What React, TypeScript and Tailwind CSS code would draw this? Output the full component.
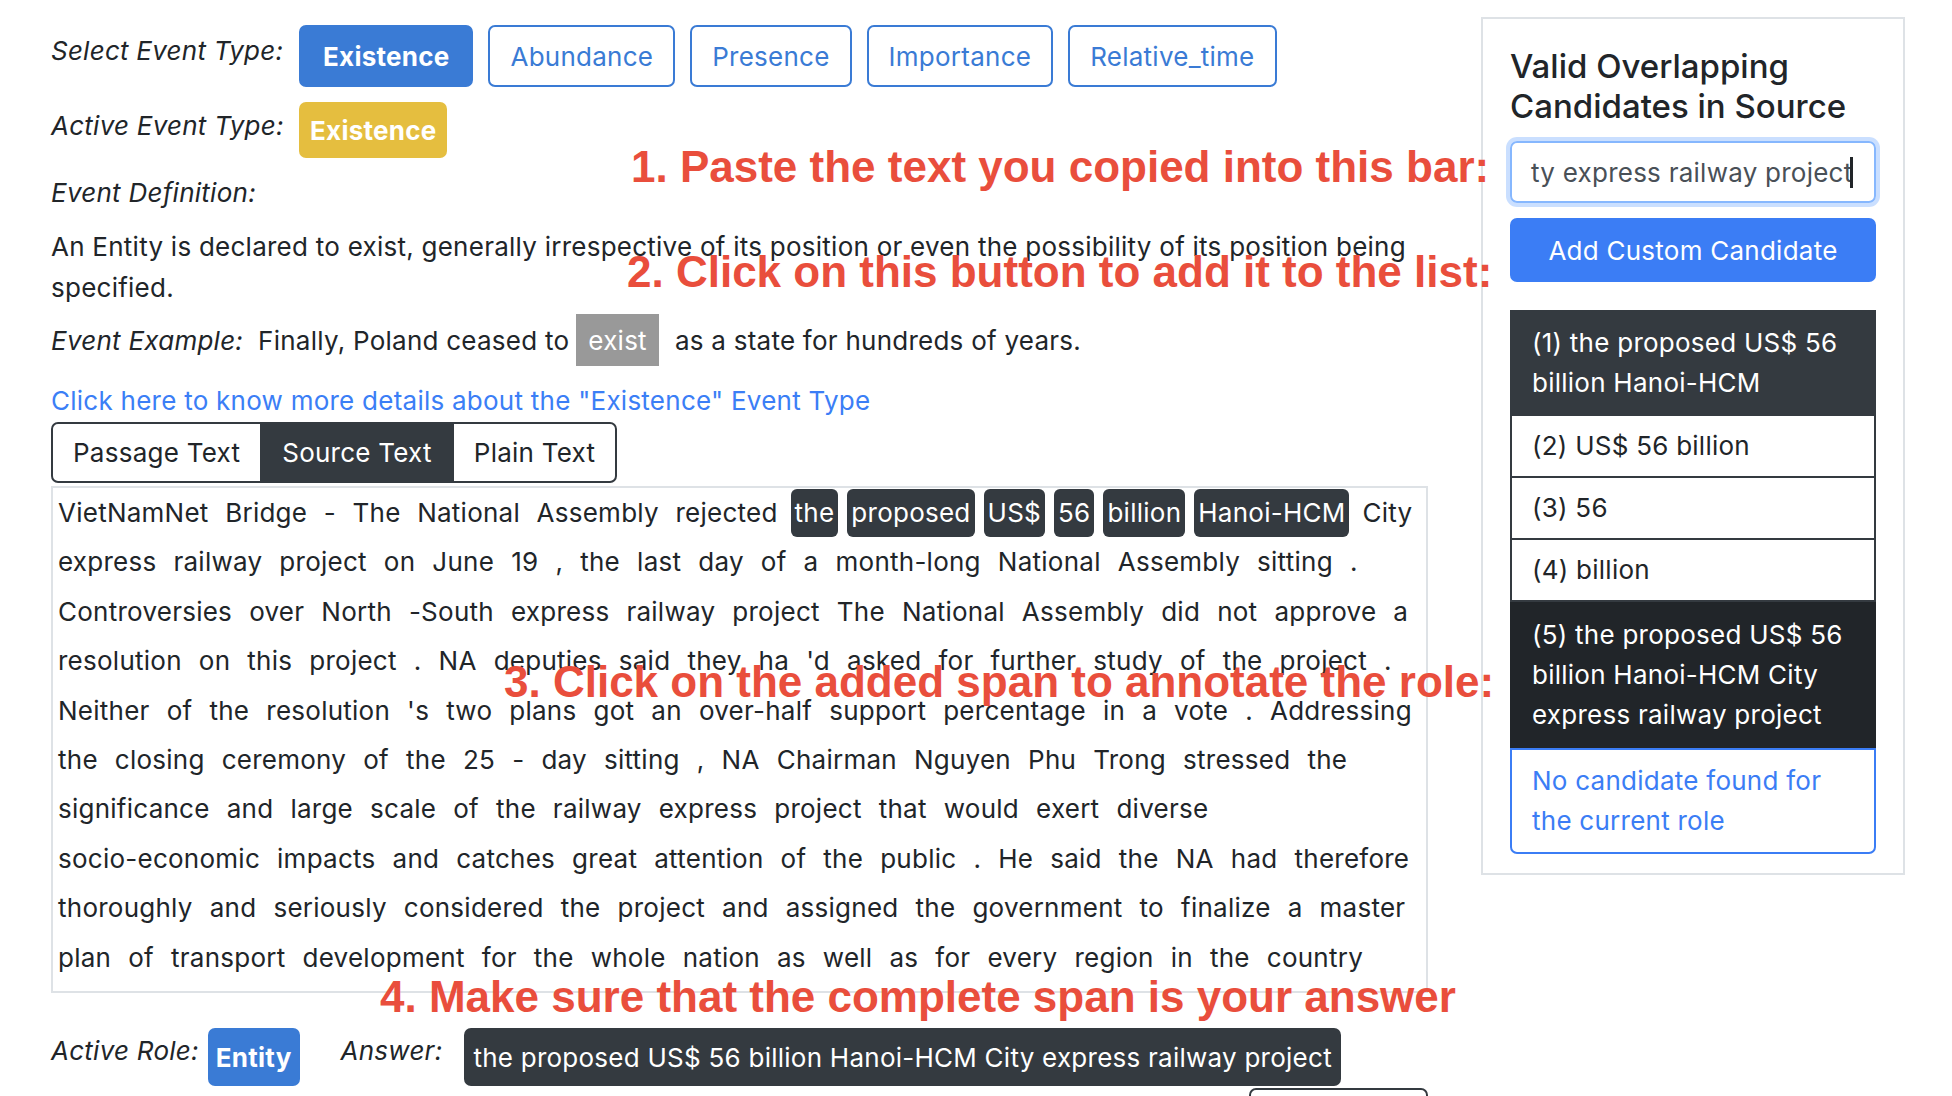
const eventTypes = ['Abundance', 'Presence', 'Importance', 'Relative_time']

const chips = ['the', 'proposed', 'US$', '56', 'billion', 'Hanoi-HCM']

const passageLines = [
  'express railway project on June 19 , the last day of a month-long National Assembly sitting .',
  'Controversies over North -South express railway project The National Assembly did not approve a',
  "resolution on this project . NA deputies said they ha 'd asked for further study of the project .",
  "Neither of the resolution 's two plans got an over-half support percentage in a vote . Addressing",
  'the closing ceremony of the 25 - day sitting , NA Chairman Nguyen Phu Trong stressed the',
  'significance and large scale of the railway express project that would exert diverse',
  'socio-economic impacts and catches great attention of the public . He said the NA had therefore',
  'thoroughly and seriously considered the project and assigned the government to finalize a master',
  'plan of transport development for the whole nation as well as for every region in the country',
]

const hints = [
  { text: '1. Paste the text you copied into this bar:', pos: 'left-[631px] top-[145px]' },
  { text: '2. Click on this button to add it to the list:', pos: 'left-[627px] top-[250px]' },
  { text: '3. Click on the added span to annotate the role:', pos: 'left-[504px] top-[660px]' },
  { text: '4. Make sure that the complete span is your answer', pos: 'left-[380px] top-[975px]' },
]

const App = () => {
  return (
    <div className="relative flex h-[1096px] w-[1952px] items-start overflow-hidden bg-white font-['Inter',sans-serif] text-[26px] tracking-[0.25px] text-[#212529]">
      {/* left column */}
      <div className="ml-[51px] flex w-[1377px] shrink-0 flex-col pt-[25px]">
        <div className="flex items-start">
          <div className="w-[248px] shrink-0 pt-[5px] italic leading-[41px]">Select Event Type:</div>
          <div className="flex gap-[15px]">
            <button className="h-[62px] rounded-[7px] border-2 border-[#3a7bd5] bg-[#3a7bd5] px-[22px] font-bold text-white">
              Existence
            </button>
            {eventTypes.map((t) => (
              <button
                key={t}
                className="h-[62px] rounded-[7px] border-2 border-[#3a7bd5] px-[20px] text-[#3a7bd5]"
              >
                {t}
              </button>
            ))}
          </div>
        </div>

        <div className="mt-[15px] flex items-start">
          <div className="w-[248px] shrink-0 pt-[3px] italic leading-[41px]">Active Event Type:</div>
          <div className="flex h-[56px] items-center rounded-[7px] bg-[#e5be3f] px-[11px] font-bold text-white">
            Existence
          </div>
        </div>

        <div className="mt-[14px] italic leading-[41px]">Event Definition:</div>

        <p className="mt-[13px] whitespace-nowrap leading-[41px]">
          An Entity is declared to exist, generally irrespective of its position or even the possibility of its position being
          <br />
          specified.
        </p>

        <div className="mt-[6px] flex h-[52px] items-center whitespace-nowrap">
          <span className="italic">Event Example:</span>
          <span className="ml-[15px]">Finally, Poland ceased to</span>
          <span className="ml-[7px] flex h-[52px] items-center bg-[#999999] px-[12px] text-white">exist</span>
          <span className="ml-[16px]">as a state for hundreds of years.</span>
        </div>

        <a className="mt-[14px] leading-[41px] text-[#3b7ef6]">
          Click here to know more details about the "Existence" Event Type
        </a>

        <div className="mt-px flex h-[61px] shrink-0 self-start overflow-hidden rounded-[7px] border-2 border-[#343a40]">
          <div className="flex items-center px-[20px]">Passage Text</div>
          <div className="flex items-center bg-[#343a40] px-[22px] text-white">Source Text</div>
          <div className="flex items-center px-[20px]">Plain Text</div>
        </div>

        <div className="mt-[3px] h-[507px] shrink-0 border-2 border-[#dee2e6] pl-[5px] leading-[49.4px]">
          <div className="flex items-center whitespace-nowrap">
            <span className="[word-spacing:9px]">VietNamNet Bridge - The National Assembly rejected</span>
            <span className="ml-[13px] flex gap-[9px]">
              {chips.map((c) => (
                <span key={c} className="flex h-[48px] items-center rounded-[6px] bg-[#343a40] px-[4px] text-white">
                  {c}
                </span>
              ))}
            </span>
            <span className="ml-[13px]">City</span>
          </div>
          {passageLines.map((l, i) => (
            <div key={i} className="whitespace-nowrap [word-spacing:9.5px]">
              {l}
            </div>
          ))}
        </div>

        <div className="mt-[35px] flex items-start">
          <span className="pt-[2px] italic leading-[41px]">Active Role:</span>
          <span className="ml-[9px] flex h-[58px] items-center rounded-[7px] bg-[#3a7bd5] px-[8px] font-bold text-white">
            Entity
          </span>
          <span className="ml-[41px] pt-[2px] italic leading-[41px]">Answer:</span>
          <span className="ml-[22px] flex h-[58px] items-center whitespace-nowrap rounded-[7px] bg-[#343a40] px-[9px] text-white">
            the proposed US$ 56 billion Hanoi-HCM City express railway project
          </span>
        </div>

        <div className="mt-[2px] flex justify-end">
          <div className="h-[60px] w-[179px] rounded-[7px] border-2 border-[#343a40]" />
        </div>
      </div>

      {/* right panel */}
      <aside className="ml-[53px] mt-[17px] h-[858px] w-[424px] shrink-0 border-2 border-[#dee2e6] p-[27px]">
        <h5 className="whitespace-nowrap text-[33px] font-medium leading-[40px] tracking-normal">
          Valid Overlapping
          <br />
          Candidates in Source
        </h5>
        <div className="mt-[15px] flex h-[62px] items-center overflow-hidden whitespace-nowrap rounded-[7px] border-2 border-[#86b7fe] px-[19px] text-[#495057] shadow-[0_0_0_4px_rgba(13,110,253,0.22)]">
          ty express railway project
          <span className="-ml-[2px] h-[31px] w-[3px] bg-[#212529]" />
        </div>
        <button className="mt-[15px] h-[64px] w-full rounded-[7px] bg-[#3b7df5] text-white">
          Add Custom Candidate
        </button>

        <div className="mt-[28px] flex flex-col whitespace-nowrap leading-[40px]">
          <div className="border-2 border-[#343a40] bg-[#343a40] px-[20px] py-[11px] text-white">
            (1) the proposed US$ 56
            <br />
            billion Hanoi-HCM
          </div>
          <div className="border-2 border-t-0 border-[#343a40] px-[20px] py-[10px]">(2) US$ 56 billion</div>
          <div className="border-2 border-t-0 border-[#343a40] px-[20px] py-[10px]">(3) 56</div>
          <div className="border-2 border-t-0 border-[#343a40] px-[20px] py-[10px]">(4) billion</div>
          <div className="border-2 border-[#212529] bg-[#212529] px-[20px] py-[11px] text-white">
            (5) the proposed US$ 56
            <br />
            billion Hanoi-HCM City
            <br />
            express railway project
          </div>
          <div className="rounded-b-[7px] border-2 border-[#3b7df5] px-[20px] py-[11px] text-[#3b7df5]">
            No candidate found for
            <br />
            the current role
          </div>
        </div>
      </aside>

      {hints.map((h) => (
        <div
          key={h.text}
          className={`absolute ${h.pos} whitespace-nowrap font-['Liberation_Sans',Arial,sans-serif] text-[44px] font-bold leading-[44px] tracking-normal text-[#e94e3c]`}
        >
          {h.text}
        </div>
      ))}
    </div>
  )
}

export default App
